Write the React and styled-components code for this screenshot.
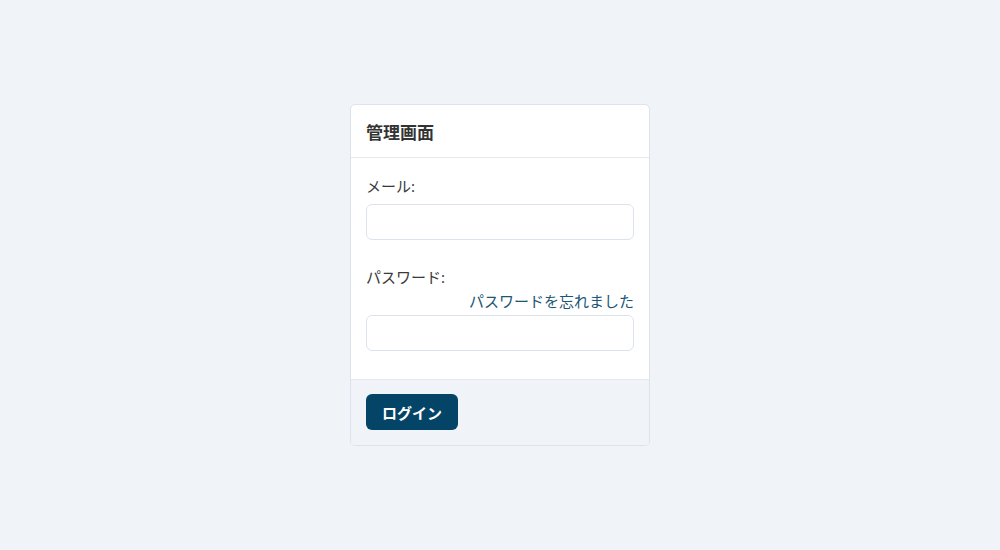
import React from 'react'
import styled, { createGlobalStyle } from 'styled-components'

const GlobalStyle = createGlobalStyle`
  html, body {
    margin: 0;
    padding: 0;
    background: #f0f3f8;
    font-family: "Noto Sans", "Noto Sans CJK JP", sans-serif;
    color: #333;
  }
`

const Page = styled.div`
  height: 550px;
  display: flex;
  align-items: center;
  justify-content: center;
`

const Card = styled.div`
  width: 298px;
  background: #fff;
  border: 1px solid #dde3ec;
  border-radius: 5px;
  overflow: hidden;
`

const Header = styled.div`
  height: 52px;
  padding: 0 15px;
  display: flex;
  align-items: center;
  border-bottom: 1px solid #e4e8ef;
  font-size: 17px;
  font-weight: 700;
  color: #333;
`

const Body = styled.div`
  padding: 16px 15px 28px;
`

const Field = styled.div`
  display: flex;
  flex-direction: column;
  & + & {
    margin-top: 25px;
  }
`

const Label = styled.label`
  font-size: 15px;
  line-height: 24px;
  margin-bottom: ${p => (p.$tight ? 0 : 6)}px;
  color: #3a3a3a;
`

const Forgot = styled.a`
  align-self: flex-end;
  font-size: 15px;
  line-height: 24px;
  margin-bottom: 2px;
  color: #1b5675;
  text-decoration: none;
  cursor: pointer;
`

const Input = styled.input`
  box-sizing: border-box;
  width: 100%;
  height: 36px;
  border: 1px solid #dde3ec;
  border-radius: 6px;
  padding: 0 10px;
  font-size: 15px;
  background: #fff;
  outline: none;
`

const Footer = styled.div`
  background: #f0f3f8;
  border-top: 1px solid #e4e8ef;
  padding: 14px 15px 15px;
`

const Button = styled.button`
  height: 36px;
  padding: 0 16px;
  border: none;
  border-radius: 6px;
  background: #044466;
  color: #fff;
  font-family: inherit;
  font-size: 15px;
  font-weight: 700;
  cursor: pointer;
`

export default function App () {
  return (
    <Page>
      <GlobalStyle />
      <Card>
        <Header>管理画面</Header>
        <Body>
          <Field>
            <Label>メール:</Label>
            <Input type='email' />
          </Field>
          <Field>
            <Label $tight>パスワード:</Label>
            <Forgot>パスワードを忘れました</Forgot>
            <Input type='password' />
          </Field>
        </Body>
        <Footer>
          <Button>ログイン</Button>
        </Footer>
      </Card>
    </Page>
  )
}
